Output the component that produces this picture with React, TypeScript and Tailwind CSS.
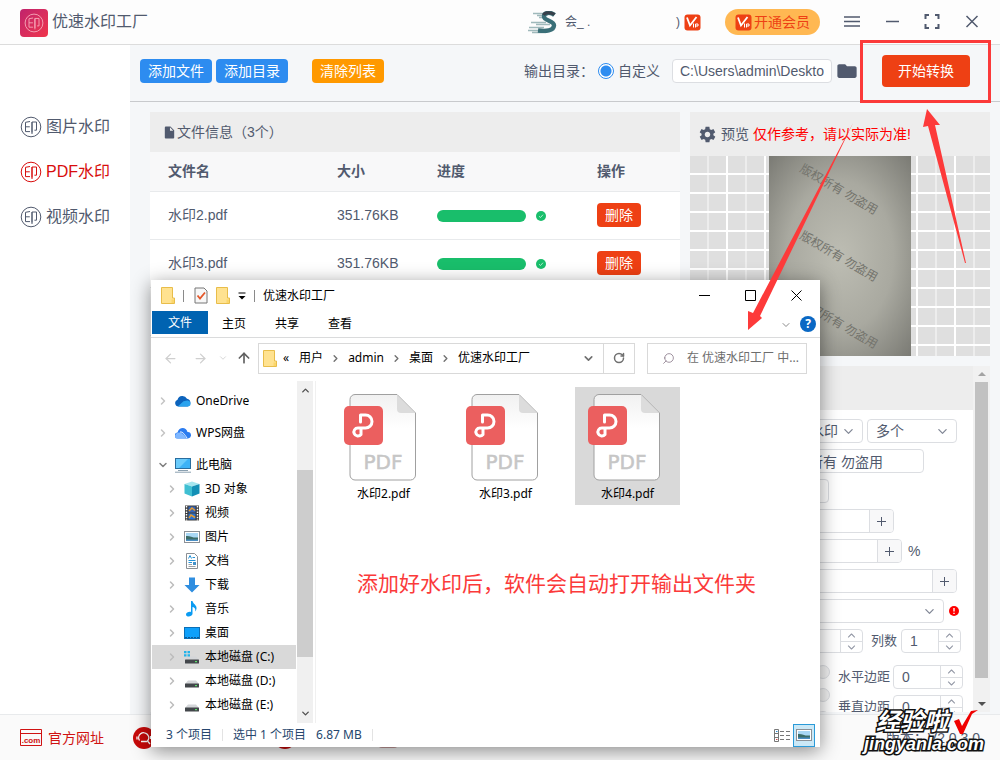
import type { ReactNode } from 'react';
import { ChevronDown, ChevronRight, ChevronUp, ArrowLeft, ArrowRight, ArrowUp, RotateCw, Search } from 'lucide-react';
import { IoMdDocument, IoMdSettings, IoMdFolder, IoIosArrowDown, IoIosArrowUp } from 'react-icons/io';

const files = [
  { name: '水印2.pdf', size: '351.76KB' },
  { name: '水印3.pdf', size: '351.76KB' },
  { name: '水印4.pdf', size: '351.76KB' },
];

const navItems = [
  { label: '图片水印', active: false },
  { label: 'PDF水印', active: true },
  { label: '视频水印', active: false },
];

function StampIcon({ className = '' }: { className?: string }) {
  return (
    <svg viewBox="0 0 22 22" className={className} fill="none" stroke="currentColor" strokeWidth="1">
      <circle cx="11" cy="11" r="9.8" />
      <path d="M10 5.5 5.5 6.3V15.6H10M5.5 10.8H9.8M12 16.5V6H16.5V14.2H14.4" />
      <path d="M12 6v12" />
    </svg>
  );
}

function VipIcon() {
  return (
    <svg viewBox="0 0 17 17" className="h-[17px] w-[17px] shrink-0">
      <rect x=".5" y=".5" width="16" height="16" rx="3" fill="#ee4014" />
      <path d="M3 3.5 6 11.5 12.5 3" fill="none" stroke="#fff" strokeWidth="1.8" />
      <path d="M9.500 9.500V13.500M11.500 13.500V10H14V12H11.500" fill="none" stroke="#fff" strokeWidth="1" />
    </svg>
  );
}

function AvatarIcon() {
  return (
    <svg viewBox="0 0 29 23" className="h-[23px] w-[29px]" fill="none">
      <path d="M5 2.500H20M9 4.500H16M11 6.500H15M3 11.500H18M8 13.500H22M0 19.500H14M1 16.500H16M4 21.500H18" stroke="#9fb9bb" strokeWidth="1.3" />
      <path d="M26.500 4C23 1 16 1 16 5.500C16 10 26.500 9.500 26 14.500C25.500 20 18 20.500 10 19.500" stroke="#3a6f78" strokeWidth="4.4" />
      <path d="M26.500 3.500C23 1 17 1 15.500 4" stroke="#37404a" strokeWidth="3" />
    </svg>
  );
}

function YellowFolder() {
  return (
    <svg viewBox="0 0 14 17" className="h-[17px] w-[14px] shrink-0">
      <path d="M.5.500H11.500V11H13.500V16.500H.500Z" fill="#ffe290" stroke="#e8bd4a" />
      <path d="M10.500 12.500H13V16H10.500Z" fill="#fbd66b" />
    </svg>
  );
}

function DiskIcon({ system = false }: { system?: boolean }) {
  return (
    <svg viewBox="0 0 16 16" className="h-4 w-4">
      <path d="M4 7.500H12L15 11H1Z" fill="#d4d6d9" />
      <rect x="1" y="10.500" width="14" height="4" rx=".5" fill="#43474b" />
      <rect x="11" y="12" width="2" height="1.200" fill="#5be06a" />
      {system && <path d="M0 2H2.500V4.200H0ZM3.500 2H6V4.200H3.500ZM0 5.200H2.500V7.400H0ZM3.500 5.200H6V7.400H3.500Z" fill="#22b3ea" />}
    </svg>
  );
}

function PictureIcon() {
  return (
    <svg viewBox="0 0 16 16" className="h-4 w-4">
      <rect x=".5" y="2.500" width="15" height="11" fill="#fff" stroke="#8b9096" />
      <rect x="2" y="4" width="12" height="8" fill="#a9d8f5" />
      <path d="M2 7C6 6.500 8 9 14 8.500V12H2Z" fill="#3c6d68" />
      <path d="M2 10.500H14V12H2Z" fill="#4b8fc4" />
    </svg>
  );
}

const treeIcons: Record<string, ReactNode> = {
  onedrive: (
    <svg viewBox="0 0 16 16" className="h-4 w-4">
      <path d="M3.500 13.500A3.500 3.500 0 0 1 2.500 6.700 5.200 5.200 0 0 1 12 5.700 4 4 0 0 1 12.500 13.500Z" fill="#0c63bc" />
      <path d="M3 13.200 8.500 8.300 12 7.500A3 3 0 0 1 13 13.500H4Z" fill="#2aa3ee" />
    </svg>
  ),
  wps: (
    <svg viewBox="0 0 16 16" className="h-4 w-4">
      <path d="M3 13.500A3 3 0 0 1 2.500 7.500C4 2 11 1.500 12.500 7A3.200 3.200 0 0 1 13 13.500Z" fill="#2b7cf0" />
      <path d="M0 11C1 6.500 6.500 6.500 9 10L11.500 13.500H3A2.700 2.700 0 0 1 0 11Z" fill="#7fb7ff" />
      <path d="M5 7C8 6.500 9.500 9.500 12 13" stroke="#fff" strokeWidth=".9" fill="none" />
    </svg>
  ),
  pc: (
    <svg viewBox="0 0 16 16" className="h-4 w-4">
      <rect x=".5" y="1.500" width="15" height="10" fill="#3db2f6" stroke="#2a6d9e" />
      <path d="M1 2H13L4 11H1Z" fill="#6bcbfb" />
      <path d="M3 13.500H13M0 15.200H16" stroke="#8aa0b0" strokeWidth="1" />
    </svg>
  ),
  cube: (
    <svg viewBox="0 0 16 16" className="h-4 w-4">
      <path d="M8 .5 15.500 3 8 5.500.5 3Z" fill="#a5e6ef" />
      <path d="M.5 3 8 5.500V15.500L.5 12.500Z" fill="#3fbfd2" />
      <path d="M15.500 3 8 5.500V15.500L15.500 12.500Z" fill="#1390b6" />
    </svg>
  ),
  video: (
    <svg viewBox="0 0 16 16" className="h-4 w-4">
      <rect x="1" y=".5" width="14" height="15" fill="#3a3a3a" />
      <path d="M2.500 1V15.500M13.500 1V15.500" stroke="#fff" strokeWidth="1.500" strokeDasharray="1.500 1.200" />
      <rect x="4.500" y="1.500" width="7" height="6" fill="#3565b8" />
      <rect x="4.500" y="8.500" width="7" height="6" fill="#2b74d2" />
      <path d="M5 6 8 3 11 5.500M5 13 7 10 11 12.500" stroke="#e79b2d" strokeWidth="1.500" fill="none" />
    </svg>
  ),
  picture: <PictureIcon />,
  doc: (
    <svg viewBox="0 0 16 16" className="h-4 w-4">
      <path d="M2.500.500H10.500L13.500 3.500V15.500H2.500Z" fill="#fff" stroke="#8a8f94" />
      <path d="M4.500 5.500 6 2.500 7.500 5.500M8.500 4.500H11M4.500 7.500H11.500M4.500 9.500H8" stroke="#2492d6" fill="none" />
      <path d="M4.500 11.500H8M4.500 13.500H11.500" stroke="#9aa0a5" />
      <rect x="9" y="9" width="3" height="3" fill="#4391c9" />
    </svg>
  ),
  download: (
    <svg viewBox="0 0 16 16" className="h-4 w-4">
      <path d="M5 .5H11V8H15.500L8 15.500.5 8H5Z" fill="#2f8ee0" />
    </svg>
  ),
  music: (
    <svg viewBox="0 0 16 16" className="h-4 w-4">
      <path d="M7 0H8.500C9 3 13 4 12.500 7.500 12.400 9 11.500 10 11 10.500 12 7.500 10.500 6.500 8.500 6V13C8 16 2 16.500 2 13.500 2 11.500 5 10.500 7 11Z" fill="#0a9bf2" />
    </svg>
  ),
  desktop: (
    <svg viewBox="0 0 16 16" className="h-4 w-4">
      <rect x=".5" y="2.500" width="15" height="11" fill="#0ea0fb" stroke="#0a6fb7" />
      <path d="M1 12.500H15" stroke="#0b5a96" strokeDasharray="2 1" />
    </svg>
  ),
  diskC: <DiskIcon system />,
  disk: <DiskIcon />,
};

const driveItems = [
  { label: '3D 对象', icon: 'cube' },
  { label: '视频', icon: 'video' },
  { label: '图片', icon: 'picture' },
  { label: '文档', icon: 'doc' },
  { label: '下载', icon: 'download' },
  { label: '音乐', icon: 'music' },
  { label: '桌面', icon: 'desktop' },
  { label: '本地磁盘 (C:)', icon: 'diskC', selected: true },
  { label: '本地磁盘 (D:)', icon: 'disk' },
  { label: '本地磁盘 (E:)', icon: 'disk' },
];

function PdfIcon() {
  return (
    <svg viewBox="0 0 80 92" className="h-[92px] w-20">
      <defs>
        <linearGradient id="page" x1="0" y1="0" x2="0" y2="1">
          <stop offset="0" stopColor="#f1f1f1" />
          <stop offset=".4" stopColor="#fff" />
        </linearGradient>
      </defs>
      <path d="M11 2.500H53L71.500 21V83a5 5 0 0 1-5 5H11a5 5 0 0 1-5-5V7.500a5 5 0 0 1 5-5Z" fill="url(#page)" stroke="#a0a0a0" />
      <path d="M53 3V17a4 4 0 0 0 4 4H71Z" fill="#dcdcdc" />
      <rect x="0" y="14" width="39" height="39" rx="5" fill="#eb5f5f" />
      <path
        d="M16.500 31V24H21.500a6.500 6.500 0 0 1 0 13H14a4 4 0 1 0 3 6.500V37"
        transform="translate(0 -1)"
        fill="none"
        stroke="#fff"
        strokeWidth="3"
        strokeLinecap="round"
        strokeLinejoin="round"
      />
      <text x="39" y="77" textAnchor="middle" fontSize="20" fill="#c6c6c6" stroke="#c6c6c6" strokeWidth=".5" className="font-['DejaVu_Sans']">
        PDF
      </text>
    </svg>
  );
}

function Spinner({ label, value, className }: { label: string; value: string; className: string }) {
  return (
    <div className={`flex h-6 shrink-0 rounded-sm border border-[#dcdee2] bg-white ${className}`}>
      <input aria-label={label} defaultValue={value} className="w-0 min-w-0 flex-1 pl-2 text-sm outline-none" />
      <div className="flex w-[22px] flex-col border-l border-[#dcdee2] text-[#9095a3]">
        <button aria-label={`${label} +`} className="flex flex-1 items-center justify-center border-b border-[#dcdee2]">
          <IoIosArrowUp size={11} />
        </button>
        <button aria-label={`${label} -`} className="flex flex-1 items-center justify-center">
          <IoIosArrowDown size={11} />
        </button>
      </div>
    </div>
  );
}

function Stepper({ label, value, className }: { label: string; value: string; className: string }) {
  return (
    <div className={`flex h-6 overflow-hidden rounded-sm border border-[#dcdee2] bg-white ${className}`}>
      <input aria-label={label} defaultValue={value} className="w-0 min-w-0 flex-1 pl-[30px] text-sm outline-none" />
      <button aria-label={`${label} +`} className="flex w-6 items-center justify-center border-l border-[#dcdee2] bg-[#f8f8f9]">
        <svg viewBox="0 0 9 9" className="h-[9px] w-[9px]" stroke="currentColor">
          <path d="M0 4.500H9M4.500 0V9" />
        </svg>
      </button>
    </div>
  );
}

function SelectBox({ label, options, className }: { label: string; options: string[]; className: string }) {
  return (
    <div className={`relative h-6 ${className}`}>
      <select aria-label={label} className="block h-full w-full appearance-none rounded-sm border border-[#dcdee2] bg-white px-2 text-sm leading-5 outline-none">
        {options.map((o) => (
          <option key={o}>{o}</option>
        ))}
      </select>
      <IoIosArrowDown size={13} className="pointer-events-none absolute right-2 top-1.5 text-[#808695]" />
    </div>
  );
}

function Header() {
  return (
    <header className="flex h-[45px] shrink-0 items-center border-b border-[#dcdcdc] bg-[#fdfdfd] pl-5 pr-5">
      <div className="mt-0.5 flex h-7 w-7 items-center justify-center rounded bg-gradient-to-br from-[#c0226c] to-[#f0354a]">
        <StampIcon className="h-5 w-5 text-[#f6a8b8]" />
      </div>
      <h1 className="ml-1 text-base leading-6">优速水印工厂</h1>
      <div className="ml-auto flex items-center">
        <AvatarIcon />
        <span className="ml-2 w-[111px] text-xs">会_ .</span>
        <span className="mr-1 text-xs">)</span>
        <VipIcon />
        <button className="ml-6 flex h-[26px] items-center gap-0.5 rounded-full bg-[#ffb852] px-2.5 text-sm text-[#ee4014]">
          <VipIcon />
          开通会员
        </button>
        <button aria-label="菜单" className="ml-6">
          <svg viewBox="0 0 16 16" className="h-4 w-4" stroke="currentColor" strokeWidth="1.500">
            <path d="M0 3H16M0 7.500H16M0 12H16" />
          </svg>
        </button>
        <button aria-label="最小化" className="ml-6">
          <svg viewBox="0 0 16 16" className="h-4 w-4" stroke="currentColor" strokeWidth="1.500">
            <path d="M2 7.500H15" />
          </svg>
        </button>
        <button aria-label="全屏" className="ml-6">
          <svg viewBox="0 0 16 16" className="h-4 w-4" fill="none" stroke="currentColor" strokeWidth="2">
            <path d="M1.500 5V1H5M11 1H14.500V5M14.500 10V14H11M5 14H1.500V10" />
          </svg>
        </button>
        <button aria-label="关闭" className="ml-6">
          <svg viewBox="0 0 16 16" className="h-4 w-4" stroke="currentColor" strokeWidth="1.500">
            <path d="M2.500 2 13.500 13M13.500 2 2.500 13" />
          </svg>
        </button>
      </div>
    </header>
  );
}

function Toolbar() {
  return (
    <div className="flex h-[57px] shrink-0 items-center border-b border-[#c8cacd] pb-1 pl-2.5 pr-[30px] text-sm">
      <button className="h-6 rounded-sm bg-[#2d8cf0] px-2 text-white">添加文件</button>
      <button className="ml-1 h-6 rounded-sm bg-[#2d8cf0] px-2 text-white">添加目录</button>
      <button className="ml-6 h-6 rounded-sm bg-[#ff9900] px-2 text-white">清除列表</button>
      <div className="ml-auto flex items-center">
        <span>输出目录：</span>
        <label className="ml-1 flex items-center gap-1">
          <input
            type="radio"
            name="output"
            defaultChecked
            className="h-4 w-4 appearance-none rounded-full border border-[#2d8cf0] bg-white bg-[radial-gradient(circle,#2d8cf0_5px,transparent_6px)]"
          />
          自定义
        </label>
        <input
          aria-label="输出路径"
          defaultValue="C:\Users\admin\Deskto"
          className="ml-3 h-6 w-40 rounded-sm border border-[#dcdee2] bg-white px-[7px] text-sm outline-none"
        />
        <button aria-label="打开目录" className="ml-1">
          <IoMdFolder size={22} />
        </button>
        <button className="ml-6 h-8 w-[88px] rounded bg-[#ee4014] text-white">开始转换</button>
      </div>
    </div>
  );
}

function FilePanel() {
  return (
    <section className="min-w-0 flex-1 bg-white">
      <div className="flex h-10 items-center bg-[#ededed] pl-3 text-sm">
        <IoMdDocument size={15} />
        文件信息（3个）
      </div>
      <table className="w-full table-fixed text-left text-sm">
        <thead>
          <tr className="h-[39px] border-b border-[#e8eaec] bg-[#f8f8f9]">
            <th className="w-[169px] pl-[18px] font-bold">文件名</th>
            <th className="w-[100px] pl-[18px] font-bold">大小</th>
            <th className="w-40 pl-[18px] font-bold">进度</th>
            <th className="pl-[18px] font-bold">操作</th>
          </tr>
        </thead>
        <tbody>
          {files.map((file) => (
            <tr key={file.name} className="h-12 border-b border-[#e8eaec]">
              <td className="pl-[18px]">{file.name}</td>
              <td className="pl-[18px]">{file.size}</td>
              <td className="pl-[18px]">
                <div className="flex items-center gap-2.5 pt-0.5">
                  <div className="h-3 w-[89px] rounded-full bg-[#19be6b]" />
                  <svg viewBox="0 0 10 10" className="h-2.5 w-2.5">
                    <circle cx="5" cy="5" r="5" fill="#19be6b" />
                    <path d="M3 5.200 4.500 6.500 7 3.700" fill="none" stroke="#d6f5e4" strokeWidth=".8" />
                  </svg>
                </div>
              </td>
              <td className="pl-[18px]">
                <button className="h-6 rounded-sm bg-[#ee4014] px-2 text-white">删除</button>
              </td>
            </tr>
          ))}
        </tbody>
      </table>
    </section>
  );
}

function Preview() {
  return (
    <section>
      <div className="flex h-11 items-center gap-1 bg-[#ededed] pl-2 text-sm">
        <IoMdSettings size={19} />
        <span>预览</span>
        <span className="text-[#ff0000]">仅作参考，请以实际为准!</span>
      </div>
      <svg viewBox="0 0 300 200" className="block h-[200px] w-full">
        <defs>
          <pattern id="tiles" width="38" height="19" patternUnits="userSpaceOnUse">
            <rect width="38" height="19" fill="#fff" />
            <rect width="36" height="17" fill="#ededed" />
            <rect width="17" height="17" fill="#dfdfdf" />
            <rect x="19" width="17" height="17" fill="#dfdfdf" />
          </pattern>
          <radialGradient id="paper" cx=".5" cy=".5" r=".75">
            <stop offset="0" stopColor="#bdbdb3" />
            <stop offset=".5" stopColor="#a9a9a0" />
            <stop offset="1" stopColor="#74746e" />
          </radialGradient>
        </defs>
        <rect width="300" height="200" fill="url(#tiles)" />
        <rect x="79" y="0" width="142" height="200" fill="url(#paper)" />
        {[15, 82, 149].map((y) => (
          <text key={y} x="109" y={y} transform={`rotate(30 109 ${y})`} fontSize="12" fill="#74746d">
            版权所有 勿盗用
          </text>
        ))}
      </svg>
    </section>
  );
}

function Settings() {
  return (
    <section className="mt-2.5 flex min-h-0 flex-1">
      <div className="min-w-0 flex-1 overflow-hidden bg-white">
        <div className="h-11 bg-[#ededed]" />
        <div className="flex flex-col items-start gap-1.5 pl-[83px] pt-[9px] text-sm">
          <div className="flex gap-1">
            <SelectBox label="类型" options={['文字水印']} className="w-[90px]" />
            <SelectBox label="数量" options={['多个']} className="w-[90px]" />
          </div>
          <input aria-label="水印内容" defaultValue="版权所有 勿盗用" className="h-6 w-[151px] rounded-sm border border-[#dcdee2] px-[7px] outline-none" />
          <SelectBox label="字体" options={['']} className="w-14" />
          <Stepper label="字号" value="25" className="w-[121px]" />
          <div className="flex items-center gap-1.5">
            <Stepper label="透明度" value="25" className="w-[129px]" />
            <span>%</span>
          </div>
          <Stepper label="旋转" value="30" className="w-[184px]" />
          <div className="flex items-center gap-[5px]">
            <SelectBox label="页面" options={['']} className="w-[171px]" />
            <svg viewBox="0 0 10 10" className="h-2.5 w-2.5">
              <circle cx="5" cy="5" r="5" fill="#f00" />
              <path d="M5 2V5.500M5 6.800V8" stroke="#fff" strokeWidth="1.400" />
            </svg>
          </div>
          <div className="flex items-center">
            <Spinner label="行数" value="1" className="w-[90px]" />
            <span className="ml-2 text-[13px]">列数</span>
            <Spinner label="列数" value="1" className="ml-1 w-[60px]" />
          </div>
          <div className="flex pl-[43px] pt-1.5">
            <div className="flex flex-col gap-[9px]">
              {['左上', '居中', '右下'].map((pos) => (
                <input key={pos} type="radio" name="position" aria-label={pos} className="block h-3.5 w-3.5 appearance-none rounded-full border border-[#dcdee2] bg-[#f3f3f3]" />
              ))}
            </div>
            <div className="ml-2 flex flex-col gap-1.5">
              {['水平边距', '垂直边距'].map((label) => (
                <div key={label} className="flex items-center gap-[3px]">
                  <span className="whitespace-nowrap text-[13px]">{label}</span>
                  <Spinner label={label} value="0" className="w-[70px]" />
                </div>
              ))}
            </div>
          </div>
        </div>
      </div>
      <div className="flex w-[17px] flex-col items-center bg-[#f1f1f1] py-1.5">
        <div className="border-x-4 border-b-4 border-x-transparent border-b-[#a3a3a3]" />
        <div className="mt-1.5 w-[13px] flex-1 bg-[#c1c1c1]" />
        <div className="mt-6 border-x-4 border-t-4 border-x-transparent border-t-[#505050]" />
      </div>
    </section>
  );
}

function ExplorerWindow() {
  return (
    <div className="absolute bottom-[13px] left-[151px] right-[180px] top-[280px] flex flex-col bg-white font-['Noto_Sans','Noto_Sans_CJK_SC',sans-serif] text-xs text-black shadow-[0_4px_18px_rgba(0,0,0,0.45)]">
      <div className="flex h-[31px] shrink-0 items-center pl-2.5 pr-[18px]">
        <YellowFolder />
        <span className="mx-2 h-3 w-px bg-[#8a8a8a]" />
        <svg viewBox="0 0 14 17" className="ml-0.5 h-[17px] w-3.5">
          <path d="M1 1H10L13 4V16H1Z" fill="#f7f7f7" stroke="#777" />
          <path d="M3.500 8.500 6 11.500 11 5.500" fill="none" stroke="#e4572a" strokeWidth="1.800" />
        </svg>
        <span className="ml-2 flex"><YellowFolder /></span>
        <svg viewBox="0 0 8 8" className="ml-2 h-2 w-2">
          <path d="M.5 1H7.500" stroke="#000" />
          <path d="M.5 4H7.500L4 7.500Z" />
        </svg>
        <span className="mx-2 h-3 w-px bg-[#8a8a8a]" />
        <span>优速水印工厂</span>
        <div className="ml-auto flex gap-[35px]">
          <button aria-label="最小化">
            <svg viewBox="0 0 11 11" className="h-[11px] w-[11px]" stroke="#000"><path d="M0 5.500H11" /></svg>
          </button>
          <button aria-label="最大化">
            <svg viewBox="0 0 11 11" className="h-[11px] w-[11px]" fill="none" stroke="#000"><path d="M.5.500H10.500V10.500H.500Z" /></svg>
          </button>
          <button aria-label="关闭">
            <svg viewBox="0 0 11 11" className="h-[11px] w-[11px]" stroke="#000"><path d="M.5.500 10.500 10.500M10.500.500.500 10.500" /></svg>
          </button>
        </div>
      </div>

      <div className="flex h-[27px] shrink-0 items-start border-b border-[#dadbdc] pl-px">
        <button className="h-[23px] w-14 bg-[#0063b1] text-white">文件</button>
        <button className="ml-3.5 h-[25px]">主页</button>
        <button className="ml-[29px] h-[25px]">共享</button>
        <button className="ml-[29px] h-[25px]">查看</button>
        <button aria-label="展开功能区" className="ml-auto mt-2">
          <ChevronDown size={12} className="text-[#8a8a8a]" />
        </button>
        <button aria-label="帮助" className="ml-2 mr-1 mt-[5px] h-4 w-4 rounded-full bg-[#0a68c4] text-xs font-bold leading-4 text-white">?</button>
      </div>

      <div className="mt-1 flex h-8 shrink-0 items-center pl-3 pr-[13px]">
        <ArrowLeft size={15} className="text-[#cfcfcf]" />
        <ArrowRight size={15} className="ml-[15px] text-[#cfcfcf]" />
        <ChevronDown size={10} className="ml-2.5 text-[#cfcfcf]" />
        <ArrowUp size={16} className="ml-2 text-[#606060]" strokeWidth={2.5} />
        <div className="ml-1.5 flex h-[31px] flex-1 items-center border border-[#d9d9d9] pl-1">
          <YellowFolder />
          <span className="ml-1.5">«</span>
          <span className="ml-2.5">用户</span>
          <ChevronRight size={11} strokeWidth={3} className="mx-[7px] text-[#707070]" />
          <span>admin</span>
          <ChevronRight size={11} strokeWidth={3} className="mx-[7px] text-[#707070]" />
          <span>桌面</span>
          <ChevronRight size={11} strokeWidth={3} className="mx-[7px] text-[#707070]" />
          <span>优速水印工厂</span>
          <ChevronDown size={13} strokeWidth={3} className="ml-auto mr-2 text-[#707070]" />
          <button aria-label="刷新" className="flex h-full w-[31px] items-center justify-center border-l border-[#d9d9d9]">
            <RotateCw size={12} strokeWidth={3} className="text-[#707070]" />
          </button>
        </div>
        <label className="ml-3 flex h-[31px] w-40 items-center border border-[#d9d9d9] pl-3.5">
          <Search size={13} className="-scale-x-100 text-[#8a7a8a]" strokeWidth={1.5} />
          <input aria-label="搜索" placeholder="在 优速水印工厂 中..." className="ml-3 w-0 min-w-0 flex-1 outline-none placeholder:text-[#6d6d6d]" />
        </label>
      </div>

      <div className="mt-[7px] flex min-h-0 flex-1">
        <nav className="w-[145px] overflow-hidden pl-px pt-1">
          <a href="#" className="flex h-8 items-center pl-[5px]">
            <ChevronRight size={12} strokeWidth={3} className="mr-1.5 text-[#c4c4c4]" />
            {treeIcons.onedrive}
            <span className="ml-[5px]">OneDrive</span>
          </a>
          <a href="#" className="flex h-8 items-center pl-[5px]">
            <ChevronRight size={12} strokeWidth={3} className="mr-1.5 text-[#c4c4c4]" />
            {treeIcons.wps}
            <span className="ml-[5px]">WPS网盘</span>
          </a>
          <a href="#" className="mt-1 flex h-6 items-center pl-[5px]">
            <ChevronDown size={12} strokeWidth={3} className="mr-1.5 text-[#808080]" />
            {treeIcons.pc}
            <span className="ml-[5px]">此电脑</span>
          </a>
          {driveItems.map((item) => (
            <a key={item.label} href="#" className={`flex h-6 items-center pl-3.5 ${item.selected ? 'bg-[#d9d9d9]' : ''}`}>
              <ChevronRight size={12} strokeWidth={3} className="mr-1.5 text-[#bcbcbc]" />
              {treeIcons[item.icon]}
              <span className="ml-[5px] whitespace-nowrap">{item.label}</span>
            </a>
          ))}
        </nav>
        <div className="ml-px flex w-4 flex-col items-center bg-[#f0f0f0] py-1">
          <ChevronUp size={11} strokeWidth={3} className="text-[#505050]" />
          <div className="mt-[74px] h-[187px] w-full bg-[#cdcdcd]" />
          <ChevronDown size={11} strokeWidth={3} className="mt-auto text-[#505050]" />
        </div>
        <div className="ml-0.5 flex flex-1 items-start gap-[17px] border-l border-[#f0f0f0] pl-[15px] pt-1.5">
          {files.map((file, i) => (
            <figure key={file.name} className={`flex h-[118px] w-[105px] flex-col items-center pt-[5px] ${i === 2 ? 'bg-[#d9d9d9]' : ''}`}>
              <PdfIcon />
              <figcaption className="leading-5">{file.name}</figcaption>
            </figure>
          ))}
        </div>
      </div>

      <div className="flex h-6 shrink-0 items-center pl-[15px] pr-[5px] text-[#26466d]">
        <span>3 个项目</span>
        <span className="mx-2.5 h-3 w-px bg-[#e3e3e3]" />
        <span>选中 1 个项目</span>
        <span className="ml-2.5">6.87 MB</span>
        <span className="ml-2.5 h-3 w-px bg-[#e3e3e3]" />
        <button aria-label="详细信息" className="ml-auto">
          <svg viewBox="0 0 16 13" className="h-[13px] w-4" fill="none" stroke="#777">
            <path d="M.5.500H4.500V12.500H.500ZM.5 4.500H4.500M.5 8.500H4.500M6 2.500H10M12 2.500H16M6 6.500H10M12 6.500H16M6 10.500H10M12 10.500H16" />
            <path d="M2 2.500H3.500" stroke="#2a8dd4" />
            <path d="M2 10.500H3.500" stroke="#d04848" />
          </svg>
        </button>
        <button aria-label="大图标" className="ml-[3px] flex h-[23px] w-[22px] items-center justify-center border border-[#2a9ad8] bg-[#cbe8f6]">
          <PictureIcon />
        </button>
      </div>
    </div>
  );
}

function Annotations() {
  return (
    <div className="pointer-events-none absolute inset-0">
      <div className="absolute right-[9px] top-10 h-[63px] w-[131px] border-[3px] border-[#fb3a3a]" />
      <svg viewBox="0 0 260 240" className="absolute right-0 top-[100px] h-[240px] w-[260px]" fill="#fd3a3a">
        <path d="M8 230V211L13 213 113 23 20 216 22 218Z" />
        <path d="M187 9 183 27 188 26 225 163H226L195 25 200 25Z" />
      </svg>
      <p className="absolute left-[357px] top-[569px] text-[21px] leading-[30px] text-[#fb3a3a]">添加好水印后，软件会自动打开输出文件夹</p>
      <div className="absolute bottom-1.5 right-4 text-right font-['Liberation_Sans','Noto_Sans_CJK_SC',sans-serif] font-bold italic leading-5 text-white [-webkit-text-stroke:3px_#111] [paint-order:stroke_fill]">
        <div className="flex items-center justify-end gap-1.5 pr-1.5">
          <span className="text-2xl leading-6">经验啦</span>
          <svg viewBox="0 0 24 24" className="h-6 w-6" fill="#f00000">
            <path d="M0 11 5 9 8 16 17 1 24 0 18 4 9 24H6Z" />
          </svg>
        </div>
        <div className="text-lg leading-5">jingyanla.com</div>
      </div>
    </div>
  );
}

export default function App() {
  return (
    <div className="relative flex h-screen flex-col overflow-hidden bg-white font-['Liberation_Sans','Noto_Sans_CJK_SC',sans-serif] text-[#515a6e]">
      <Header />
      <div className="flex min-h-0 flex-1">
        <aside className="w-[130px] shrink-0 pl-5 pt-[70px]">
          {navItems.map((item) => (
            <a key={item.label} href="#" className={`mb-[21px] flex h-6 items-center gap-1 text-base ${item.active ? 'text-[#d80d0d]' : ''}`}>
              <StampIcon className="h-[22px] w-[22px]" />
              {item.label}
            </a>
          ))}
        </aside>
        <main className="flex min-w-0 flex-1 flex-col bg-[#f5f7f9]">
          <Toolbar />
          <div className="flex min-h-0 flex-1 gap-2.5 pb-0.5 pl-5 pr-2.5 pt-2.5">
            <FilePanel />
            <div className="flex w-[300px] shrink-0 flex-col">
              <Preview />
              <Settings />
            </div>
          </div>
        </main>
      </div>
      <footer className="flex h-[46px] shrink-0 items-center border-t border-[#e8eaec] bg-[#fafafa] px-5 text-sm">
        <a href="#" className="flex items-center gap-1.5 text-[#d01212]">
          <svg viewBox="0 0 22 17" className="h-[17px] w-[22px]" fill="none" stroke="currentColor">
            <path d="M.5.500H21.500V16.500H.500ZM.5 4.500H21.500" />
            <text x="11" y="14" textAnchor="middle" fontSize="8" fontWeight="bold" stroke="none" fill="currentColor">.com</text>
          </svg>
          官方网址
        </a>
        <a href="#" aria-label="在线客服" className="ml-[29px]">
          <svg viewBox="0 0 22 22" className="h-[22px] w-[22px]">
            <circle cx="11" cy="11" r="11" fill="#c80a0a" />
            <path d="M6.500 13.500A5 5 0 1 1 14.500 14L17 17M4 9.500V12.500M8 14.500H14M17.500 9V12" fill="none" stroke="#fff" strokeWidth="1.300" />
          </svg>
        </a>
        <a href="#" aria-label="QQ客服" className="ml-[119px] h-[22px] w-[22px] rounded-full bg-[#c80a0a]" />
        <a href="#" aria-label="帮助" className="ml-[82px] h-5 w-5 rounded-sm bg-[#c9a0a0]" />
        <span className="ml-auto">版本：V2.0.3.0</span>
      </footer>
      <ExplorerWindow />
      <Annotations />
    </div>
  );
}
